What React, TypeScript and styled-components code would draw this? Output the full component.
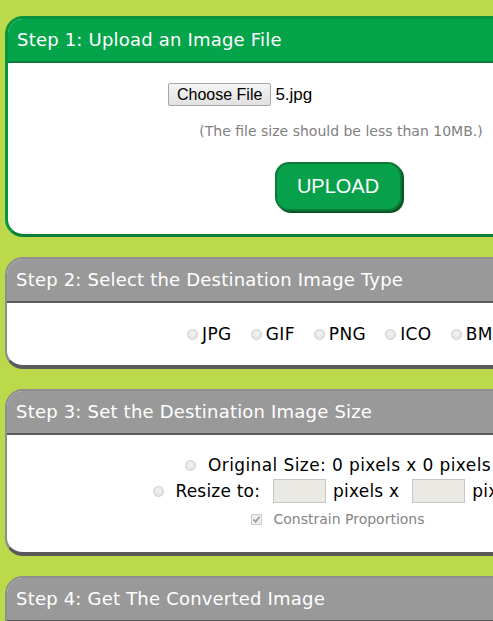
import React from 'react'
import styled, { createGlobalStyle, css } from 'styled-components'

type Variant = 'green' | 'gray'

const colors = {
  page: '#bbd94a',
  green: '#04a44b',
  greenDark: '#0a7f39',
  greenBorder: '#07963f',
  gray: '#999999',
  grayDark: '#5a5a5a',
  grayBorder: '#8e8e8e',
}

const GlobalStyle = createGlobalStyle`
  html, body {
    margin: 0;
    padding: 0;
    background: ${colors.page};
    overflow: hidden;
  }
  body {
    font-family: 'DejaVu Sans', Verdana, sans-serif;
  }
`

const formats = ['JPG', 'GIF', 'PNG', 'ICO', 'BMP', 'TIFF']

export default function App() {
  return (
    <>
      <GlobalStyle />
      <Page>
        <Panel $variant="green">
          <PanelHeader $variant="green">Step 1: Upload an Image File</PanelHeader>
          <UploadBody>
            <FilePicker>
              <FileButton type="button">Choose File</FileButton>
              <FileName>5.jpg</FileName>
            </FilePicker>
            <Hint>(The file size should be less than 10MB.)</Hint>
            <UploadButton type="button">UPLOAD</UploadButton>
          </UploadBody>
        </Panel>

        <Panel $variant="gray">
          <PanelHeader $variant="gray">Step 2: Select the Destination Image Type</PanelHeader>
          <TypeBody>
            {formats.map((f) => (
              <TypeOption key={f}>
                <Radio />
                {f}
              </TypeOption>
            ))}
          </TypeBody>
        </Panel>

        <Panel $variant="gray">
          <PanelHeader $variant="gray">Step 3: Set the Destination Image Size</PanelHeader>
          <SizeBody>
            <SizeRow>
              <Radio $gap={12} />
              <span>Original Size: 0 pixels x 0 pixels</span>
            </SizeRow>
            <SizeRow $tight>
              <Radio $gap={11} />
              <span>Resize to:</span>
              <SizeInput />
              <span>pixels x</span>
              <SizeInput />
              <span>pixels</span>
            </SizeRow>
            <ConstrainRow>
              <Checkbox>
                <svg width="9" height="9" viewBox="0 0 9 9">
                  <path d="M1.5 4.5 L3.6 6.8 L7.6 1.8" fill="none" stroke="#9a9a9a" strokeWidth="1.6" />
                </svg>
              </Checkbox>
              Constrain Proportions
            </ConstrainRow>
          </SizeBody>
        </Panel>

        <Panel $variant="gray">
          <PanelHeader $variant="gray">Step 4: Get The Converted Image</PanelHeader>
          <SizeBody />
        </Panel>
      </Page>
    </>
  )
}

const Page = styled.div`
  display: flex;
  flex-direction: column;
  gap: 20px;
  width: 666px;
  padding: 16px 0 0 5px;
`

const Panel = styled.div<{ $variant: Variant }>`
  border-radius: 18px;
  overflow: hidden;
  background: #fff;
  ${({ $variant }) =>
    $variant === 'green'
      ? css`
          border: 3px solid ${colors.greenBorder};
          border-bottom-color: ${colors.greenDark};
        `
      : css`
          border: 2px solid ${colors.grayBorder};
          border-bottom: 4px solid ${colors.grayDark};
        `}
`

const PanelHeader = styled.div<{ $variant: Variant }>`
  height: 42px;
  line-height: 42px;
  padding: 0 9px;
  color: #fff;
  font-size: 18px;
  letter-spacing: 0.2px;
  background: ${({ $variant }) => ($variant === 'green' ? colors.green : colors.gray)};
  border-bottom: 2px solid ${({ $variant }) => ($variant === 'green' ? colors.greenDark : colors.grayDark)};
`

const UploadBody = styled.div`
  display: flex;
  flex-direction: column;
  align-items: center;
  padding: 20px 0 23px;
`

const FilePicker = styled.div`
  width: 340px;
  display: flex;
  align-items: center;
  gap: 4px;
`

const FileButton = styled.button`
  height: 23px;
  padding: 0 8px;
  font-family: 'Liberation Sans', Arial, sans-serif;
  font-size: 16px;
  color: #000;
  background: linear-gradient(#f4f4f4, #e1e1e1);
  border: 1px solid #a6a6a6;
  border-radius: 2px;
`

const FileName = styled.span`
  font-family: 'Liberation Sans', Arial, sans-serif;
  font-size: 17px;
  color: #000;
`

const Hint = styled.div`
  margin: 17px 0 0 6px;
  font-size: 14px;
  line-height: 17px;
  color: #808080;
`

const UploadButton = styled.button`
  margin-top: 22px;
  width: 127px;
  height: 49px;
  border-radius: 14px;
  background: #06a14a;
  border: 2px solid #0a7a36;
  box-shadow: 2px 2px 0 #0a5524;
  color: #fff;
  font-family: 'Liberation Sans', Arial, sans-serif;
  font-size: 20px;
`

const TypeBody = styled.div`
  display: flex;
  gap: 19px;
  height: 62px;
  align-items: center;
  padding-left: 180px;
  font-size: 17px;
  letter-spacing: 0.4px;
  color: #000;
`

const TypeOption = styled.label`
  display: flex;
  align-items: center;
  gap: 4px;
`

const Radio = styled.span<{ $gap?: number }>`
  display: inline-block;
  flex: none;
  width: 11px;
  height: 11px;
  box-sizing: border-box;
  border-radius: 50%;
  border: 1px solid #cfcfcf;
  background: radial-gradient(circle at 50% 40%, #f4f4f4, #dcdcdc);
  margin-right: ${({ $gap }) => $gap ?? 0}px;
`

const SizeBody = styled.div`
  display: flex;
  flex-direction: column;
  align-items: center;
  padding: 17px 0 24px;
  min-height: 60px;
  font-size: 17px;
  letter-spacing: 0.4px;
  color: #000;
`

const SizeRow = styled.div<{ $tight?: boolean }>`
  display: flex;
  align-items: center;
  height: 26px;
  white-space: nowrap;
  letter-spacing: ${({ $tight }) => ($tight ? '0.2px' : '0.4px')};
`

const SizeInput = styled.span`
  display: inline-block;
  flex: none;
  width: 53px;
  height: 24px;
  box-sizing: border-box;
  background: #ebe9e4;
  border: 1px solid #c6c6c6;
  margin: 0 7px 0 13px;
`

const ConstrainRow = styled.div`
  display: flex;
  align-items: center;
  gap: 11px;
  height: 18px;
  margin-top: 6px;
  font-size: 14px;
  letter-spacing: 0;
  color: #858585;
`

const Checkbox = styled.span`
  display: inline-flex;
  align-items: center;
  justify-content: center;
  width: 11px;
  height: 11px;
  box-sizing: border-box;
  border: 1px solid #cccccc;
  background: #eeeeee;
`
